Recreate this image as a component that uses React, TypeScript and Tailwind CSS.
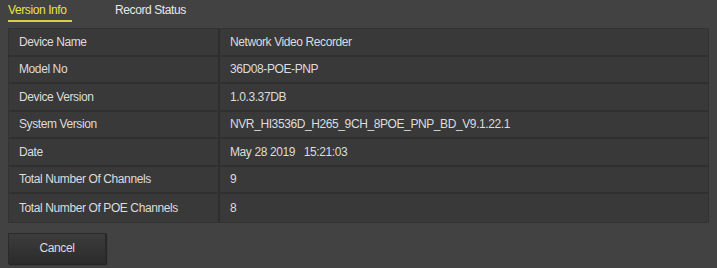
const rows: [string, string][] = [
  ["Device Name", "Network Video Recorder"],
  ["Model No", "36D08-POE-PNP"],
  ["Device Version", "1.0.3.37DB"],
  ["System Version", "NVR_HI3536D_H265_9CH_8POE_PNP_BD_V9.1.22.1"],
  ["Date", "May 28 2019   15:21:03"],
  ["Total Number Of Channels", "9"],
  ["Total Number Of POE Channels", "8"],
];

const App = () => {
  return (
    <div
      className="h-[268px] w-[717px] overflow-hidden bg-[#424242] text-[12px] tracking-[-0.4px] text-[#dcdcdc]"
      style={{ fontFamily: '"Liberation Sans", Arial, sans-serif' }}
    >
      <div className="flex h-[22px] items-start gap-[43px] pl-[8px] pt-[3px]">
        <div className="flex flex-col">
          <span className="leading-[15px] text-[#e6e24a]">Version Info</span>
          <div className="mt-[2px] h-[2px] w-[64px] bg-[#d6d23a]" />
        </div>
        <span className="leading-[15px] text-[#e8e8e8]">Record Status</span>
      </div>

      <div className="mx-[8px] mt-[6px] border border-[#333] bg-[#393939]">
        {rows.map(([label, value], i) => (
          <div
            key={label}
            className={`flex h-[27.5px] items-center ${i < rows.length - 1 ? "border-b-2 border-[#303030]" : ""}`}
          >
            <div className="flex h-full w-[211px] items-center border-r-2 border-[#2e2e2e] pl-[10px]">
              {label}
            </div>
            <div className="flex-1 pl-[10px] whitespace-pre">{value}</div>
          </div>
        ))}
      </div>

      <div className="mt-[10px] pl-[8px]">
        <button className="h-[31px] w-[98px] border border-[#2a2a2a] bg-gradient-to-b from-[#3c3c3c] to-[#2c2c2c] text-[12px] text-[#dcdcdc] shadow-[1px_1px_1px_rgba(0,0,0,0.4)]">
          Cancel
        </button>
      </div>
    </div>
  );
};

export default App;
